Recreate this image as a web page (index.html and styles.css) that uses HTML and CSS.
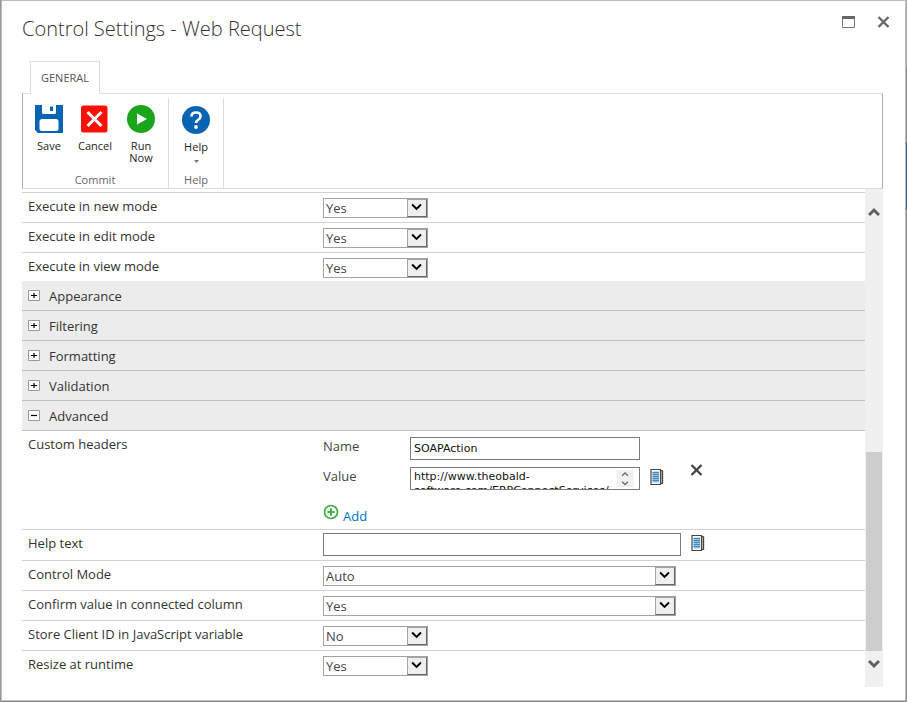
FILE: index.html
```html
<!DOCTYPE html>
<html lang="en">
<head>
<meta charset="utf-8">
<title>Control Settings - Web Request</title>
<link rel="stylesheet" href="styles.css">
</head>
<body>
<svg class="defs" aria-hidden="true">
  <symbol id="arrow" viewBox="0 0 20 18"><path d="M4.500 5 9.500 10l5-5" fill="none" stroke="#000" stroke-width="2.200"/></symbol>
  <symbol id="book" viewBox="0 0 14 16">
    <path d="M10 1.500h2.500v13H10" fill="#ccc" stroke="#444" stroke-width="1"/>
    <path d="M12.500 2v13" stroke="#444" stroke-width="1.500" stroke-dasharray="1.500 .7"/>
    <path d="M1 .5h9.500v15H1z" fill="#fff" stroke="#444" stroke-width="1.200"/>
    <path d="M2.500 2.500H9v11H2.500z" fill="#8fc0e6"/>
    <path d="M2.500 3.500H9m-6.500 2H9m-6.500 2H9m-6.500 2H9m-6.500 2H9" stroke="#4a86b8"/>
  </symbol>
  <symbol id="plus" viewBox="0 0 12 11"><path d="M.5.5h11v10H.5z" fill="#fff" stroke="#999"/><path d="M3 5.500h6M6 3v5" stroke="#000" stroke-width="1.200"/></symbol>
  <symbol id="minus" viewBox="0 0 12 11"><path d="M.5.5h11v10H.5z" fill="#fff" stroke="#999"/><path d="M3 5.500h6" stroke="#000" stroke-width="1.200"/></symbol>
</svg>
<main class="dialog">
  <header class="titlebar">
    <h1>Control Settings - Web Request</h1>
    <div class="window-buttons">
      <button type="button" aria-label="Maximize"><svg width="13" height="12" viewBox="0 0 13 12"><path d="M.5 1.500h12v10H.5z" fill="#fff" stroke="#777"/><path d="M0 1.500h13" stroke="#666" stroke-width="3"/></svg></button>
      <button type="button" aria-label="Close"><svg width="13" height="12" viewBox="0 0 13 12"><path d="M1.500 1l10 10m0-10-10 10" stroke="#686868" stroke-width="2.400"/></svg></button>
    </div>
  </header>
  <nav class="tabs"><button type="button" class="tab">GENERAL</button></nav>
  <section class="ribbon">
    <div class="group">
      <div class="tools">
        <button type="button" class="tool"><svg width="28" height="28" viewBox="0 0 28 28"><path d="M0 0h7v7.500q0 1.500 1.500 1.500h11q1.500 0 1.500-1.500V0h7v28H3l-3-3z" fill="#0664b2"/><path d="M15 1.500h3V6h-3z" fill="#0664b2"/><rect x="4.500" y="14" width="19" height="12" rx="2.500" fill="#fff"/></svg><span>Save</span></button>
        <button type="button" class="tool"><svg width="28" height="28" viewBox="0 0 28 28"><rect x="0" y=".5" width="26.500" height="27" rx="2.500" fill="#fd1004"/><path d="M6.500 7l14 14m0-14-14 14" stroke="#fff" stroke-width="3"/></svg><span>Cancel</span></button>
        <button type="button" class="tool"><svg width="28" height="28" viewBox="0 0 28 28"><circle cx="14" cy="14" r="14" fill="#1aa51a"/><path d="M10 8.500v11l10-5.500z" fill="#fff"/></svg><span>Run<br>Now</span></button>
      </div>
      <div class="caption">Commit</div>
    </div>
    <div class="group help-group">
      <div class="tools">
        <button type="button" class="tool"><svg width="28" height="28" viewBox="0 0 28 28"><circle cx="14" cy="14" r="14" fill="#0664b2"/><path d="M9.500 10.500q0-4 4.500-4t4.500 3.700q0 2-2 3.300-2.500 1.500-2.500 3.500" fill="none" stroke="#fff" stroke-width="2.600"/><circle cx="14" cy="21" r="1.900" fill="#fff"/></svg><span>Help</span><svg width="5" height="3" viewBox="0 0 5 3"><path d="M0 0h5L2.500 3z" fill="#777"/></svg></button>
      </div>
      <div class="caption">Help</div>
    </div>
  </section>
  <div class="viewport">
    <form class="settings">
      <div class="rows">
        <div class="row"><label for="new">Execute in new mode</label><span class="select"><select id="new"><option>Yes</option><option>No</option></select><svg><use href="#arrow"/></svg></span></div>
        <div class="row"><label for="edit">Execute in edit mode</label><span class="select"><select id="edit"><option>Yes</option><option>No</option></select><svg><use href="#arrow"/></svg></span></div>
        <div class="row"><label for="view">Execute in view mode</label><span class="select"><select id="view"><option>Yes</option><option>No</option></select><svg><use href="#arrow"/></svg></span></div>
      </div>
      <button type="button" class="section"><svg><use href="#plus"/></svg>Appearance</button>
      <button type="button" class="section"><svg><use href="#plus"/></svg>Filtering</button>
      <button type="button" class="section"><svg><use href="#plus"/></svg>Formatting</button>
      <button type="button" class="section"><svg><use href="#plus"/></svg>Validation</button>
      <button type="button" class="section"><svg><use href="#minus"/></svg>Advanced</button>
      <div class="rows">
        <div class="row headers">
          <span class="label">Custom headers</span>
          <div>
            <div class="header-item">
              <div class="pairs">
                <label for="hname">Name</label><input id="hname" type="text" value="SOAPAction">
                <label class="second" for="hvalue">Value</label>
                <div class="area"><textarea id="hvalue" rows="1">http://www.theobald-
software.com/ERPConnectServices/</textarea><svg class="spin" viewBox="0 0 18 18"><path d="M0 0h18v18H0z" fill="#f0f0f0"/><path d="M6 6l3-3 3 3M6 12.500l3 3 3-3" fill="none" stroke="#666" stroke-width="1.400"/></svg></div>
                <button type="button" class="book" aria-label="Edit value"><svg><use href="#book"/></svg></button>
              </div>
              <button type="button" class="remove" aria-label="Remove header"><svg width="13" height="12" viewBox="0 0 13 12"><path d="M1.500 1l10 10m0-10-10 10" stroke="#444" stroke-width="2.300"/></svg></button>
            </div>
            <a class="add" href="#add"><svg width="16" height="16" viewBox="0 0 16 16"><circle cx="8" cy="8" r="6.500" fill="#f2fbf2" stroke="#3fae49" stroke-width="1.700"/><path d="M4.500 8h7M8 4.500v7" stroke="#3fae49" stroke-width="2"/></svg><span>Add</span></a>
          </div>
        </div>
        <div class="row help"><label for="help">Help text</label><div class="line"><input id="help" type="text"><button type="button" class="book" aria-label="Edit help text"><svg><use href="#book"/></svg></button></div></div>
        <div class="row"><label for="mode">Control Mode</label><span class="select wide"><select id="mode"><option>Auto</option></select><svg><use href="#arrow"/></svg></span></div>
        <div class="row"><label for="confirm">Confirm value in connected column</label><span class="select wide"><select id="confirm"><option>Yes</option><option>No</option></select><svg><use href="#arrow"/></svg></span></div>
        <div class="row"><label for="store">Store Client ID in JavaScript variable</label><span class="select"><select id="store"><option>No</option><option>Yes</option></select><svg><use href="#arrow"/></svg></span></div>
        <div class="row"><label for="resize">Resize at runtime</label><span class="select"><select id="resize"><option>Yes</option><option>No</option></select><svg><use href="#arrow"/></svg></span></div>
      </div>
    </form>
    <div class="scrollbar">
      <svg width="12" height="10" viewBox="0 0 12 10"><path d="M1 8l5-5 5 5" fill="none" stroke="#606060" stroke-width="3"/></svg>
      <div class="thumb"></div>
      <svg width="12" height="10" viewBox="0 0 12 10"><path d="M1 2l5 5 5-5" fill="none" stroke="#606060" stroke-width="3"/></svg>
    </div>
  </div>
</main>
</body>
</html>
```
FILE: styles.css
```css
* { box-sizing: border-box; }
html { height: 100%; }
body {
  min-height: 100%;
  margin: 0;
  display: flex;
  border-left: 1px solid #98989c;
  background: linear-gradient(#a8a8b0 67px, #8c8c8c 67px 142px, #2a6594 142px 210px, #8c8c8c 210px);
  font: 13px/18px "Open Sans", "Noto Sans", sans-serif;
  color: #333;
}
button { border: 0; padding: 0; background: none; font: inherit; color: inherit; }
svg { display: block; flex: none; }
.defs { position: absolute; width: 0; height: 0; }
.dialog {
  flex: 1;
  display: flex;
  flex-direction: column;
  margin: 0 1px 1px 0;
  padding: 0 22px 13px 20px;
  border: 1px solid #bcbcbe;
  background: #fff;
}
.titlebar { display: flex; justify-content: space-between; height: 60px; padding-top: 14px; }
h1 { margin: 0; font-size: 20px; line-height: 28px; font-weight: 300; color: #333; }
.window-buttons { display: flex; align-items: flex-start; gap: 22px; margin-right: -7px; }
.window-buttons button { margin-top: 1px; }
.tabs { display: flex; padding-left: 8px; height: 32px; }
.tab {
  position: relative;
  width: 70px;
  height: 33px;
  border: 1px solid #dcdcdc;
  border-bottom: 0;
  background: #fff;
  font-size: 11px;
  color: #555;
}
.ribbon {
  display: flex;
  height: 96px;
  padding-top: 4px;
  border: 1px solid #ababab;
  border-top-color: #dcdcdc;
  border-bottom-color: #dcdcdc;
}
.group { display: flex; flex-direction: column; justify-content: space-between; border-right: 1px solid #dcdcdc; padding: 7px 4px 0 3px; }
.help-group { padding: 8px 4px 0; }
.tools { display: flex; }
.tool {
  display: flex;
  flex-direction: column;
  align-items: center;
  gap: 7px;
  width: 46px;
  font-size: 11px;
  line-height: 12px;
  color: #222;
}
.caption { text-align: center; font-size: 11px; line-height: 16px; color: #666; }
.viewport { flex: 1; display: flex; }
.settings { flex: 1; padding-top: 3px; }
.settings > .rows:first-child { border-top: 1px solid #d2d2d2; }
.row {
  display: grid;
  grid-template-columns: 295px 1fr;
  min-height: 30px;
  padding: 5px 0 0 6px;
  border-bottom: 1px solid #d2d2d2;
}
.row:last-child { min-height: 28px; border-bottom: 0; }
.row > label, .row > .label { line-height: 16px; }
.select { position: relative; display: block; width: 105px; height: 20px; }
.select.wide { width: 353px; }
.select select {
  appearance: none;
  width: 100%;
  height: 20px;
  padding: 0 22px 0 2px;
  border: 1px solid #a3a3a3;
  border-radius: 0;
  background: #fff;
  font: inherit;
  line-height: 18px;
  color: #444;
}
.select svg {
  position: absolute;
  top: 1px;
  right: 1px;
  width: 20px;
  height: 18px;
  border: 1px solid #a3a3a3;
  border-right-color: #666;
  border-bottom-color: #666;
  background: #efefef;
  pointer-events: none;
}
.section {
  display: flex;
  align-items: center;
  gap: 9px;
  width: 100%;
  height: 30px;
  padding-left: 6px;
  border-bottom: 1px solid #c0c0c0;
  background: #ececec;
}
.section svg { width: 12px; height: 11px; }
input, textarea {
  display: block;
  width: 100%;
  height: 23px;
  margin: 0;
  padding: 0 3px;
  border: 1px solid #7b7b7b;
  border-radius: 0;
  background: #fff;
  font: 11px/14px "DejaVu Sans", sans-serif;
  color: #111;
}
textarea { padding-top: 2px; resize: none; overflow: hidden; white-space: pre; }
.headers { min-height: 99px; }
.header-item { display: flex; align-items: center; gap: 26px; padding-top: 1px; }
.pairs { display: grid; grid-template-columns: 87px 230px 24px; row-gap: 7px; }
.pairs label { color: #444; }
.pairs .second { grid-column: 1; }
.pairs .book { align-self: start; margin-left: 10px; padding-top: 2px; }
.remove { padding-top: 12px; }
.area { position: relative; }
.spin { position: absolute; top: 3px; right: 6px; width: 18px; height: 17px; }
.book svg { width: 14px; height: 16px; }
.add { display: flex; gap: 4px; padding-top: 14px; color: #0072c6; text-decoration: none; }
.add span { padding-top: 3px; }
.help { min-height: 31px; padding-top: 3px; }
.help > label { padding-top: 2px; }
.line { display: flex; gap: 10px; align-items: flex-start; }
.line input { width: 358px; }
.line .book { padding-top: 2px; }
.scrollbar {
  display: flex;
  flex-direction: column;
  align-items: center;
  width: 18px;
  padding: 18px 1px;
  background: #f0f0f0;
}
.thumb { width: 16px; flex: 0 0 43%; margin: auto 0 8px; background: #cdcdcd; }
```
